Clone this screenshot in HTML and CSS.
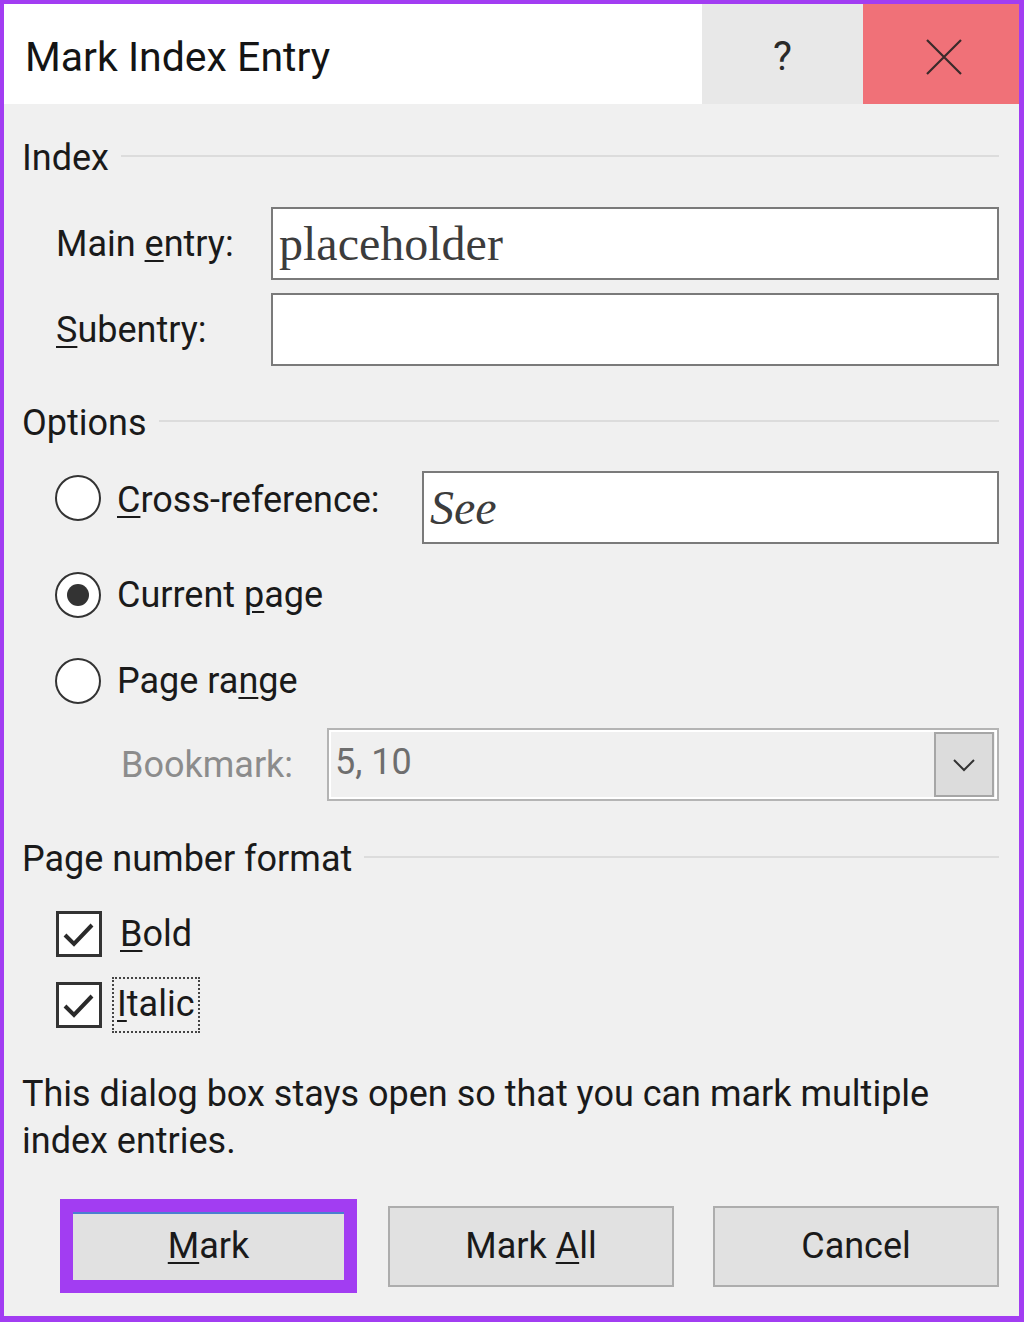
FILE: index.html
```html
<!DOCTYPE html>
<html lang="en">
<head>
  <meta charset="UTF-8" />
  <title>Mark Index Entry</title>
  <meta name="viewport" content="width=device-width, initial-scale=1.0" />
  <link rel="stylesheet" href="styles.css">
</head>
<body>
  <div class="dialog">
    <div class="titlebar">
      <div class="title">Mark Index Entry</div>
      <div class="tb-btn help">?</div>
      <div class="tb-btn close">
        <svg width="40" height="40" viewBox="0 0 40 40"><path d="M3 3 L37 37 M37 3 L3 37" stroke="#3a2a2a" stroke-width="2.2" fill="none"/></svg>
      </div>
    </div>

    <div class="body">
      <div class="group-title first">Index</div>

      <div class="field-row main-row">
        <label class="field-label">Main <u>e</u>ntry:</label>
        <div class="textbox serif">placeholder</div>
      </div>
      <div class="field-row sub-row">
        <label class="field-label"><u>S</u>ubentry:</label>
        <div class="textbox"></div>
      </div>

      <div class="group-title options">Options</div>

      <div class="radio-row cross-row">
        <span class="radio"></span>
        <span class="radio-text"><u>C</u>ross-reference:</span>
        <div class="textbox serif italic">See</div>
      </div>
      <div class="radio-row current-row">
        <span class="radio checked"></span>
        <span class="radio-text">Current <u>p</u>age</span>
      </div>
      <div class="radio-row range-row">
        <span class="radio"></span>
        <span class="radio-text">Page ra<u>n</u>ge</span>
      </div>

      <div class="bookmark-row">
        <span class="bookmark-label">Bookmark:</span>
        <div class="select">
          <span class="select-value">5, 10</span>
          <span class="select-btn">
            <svg width="24" height="14" viewBox="0 0 24 14"><path d="M2 2 L12 12 L22 2" stroke="#333" stroke-width="2" fill="none"/></svg>
          </span>
        </div>
      </div>

      <div class="group-title format">Page number format</div>

      <div class="check-row bold-row">
        <span class="checkbox">
          <svg width="40" height="40" viewBox="0 0 40 40"><path d="M6 21 L15 30 L33 11" stroke="#2a2a2a" stroke-width="4" fill="none"/></svg>
        </span>
        <span class="check-text"><u>B</u>old</span>
      </div>
      <div class="check-row italic-row">
        <span class="checkbox">
          <svg width="40" height="40" viewBox="0 0 40 40"><path d="M6 21 L15 30 L33 11" stroke="#2a2a2a" stroke-width="4" fill="none"/></svg>
        </span>
        <span class="check-text focus"><u>I</u>talic</span>
      </div>

      <p class="note">This dialog box stays open so that you can mark multiple index entries.</p>

      <div class="buttons">
        <button class="btn btn-mark"><u>M</u>ark</button>
        <button class="btn btn-all">Mark <u>A</u>ll</button>
        <button class="btn btn-cancel">Cancel</button>
      </div>
    </div>
  </div>
</body>
</html>
```

FILE: styles.css
```css
* { box-sizing: border-box; margin: 0; padding: 0; }

body {
  font-family: Roboto, "Noto Sans", sans-serif;
  background: #a23df2;
  color: #1a1a1a;
}

u { text-decoration-thickness: 2px; text-underline-offset: 4px; }

.dialog {
  width: 1024px;
  height: 1322px;
  border: 4px solid #a23df2;
  border-right-width: 5px;
  border-bottom-width: 6px;
  background: #f0f0f0;
  display: flex;
  flex-direction: column;
}

.titlebar {
  height: 100px;
  display: flex;
  background: #fff;
}

.title {
  flex: 1;
  padding-left: 21px;
  padding-top: 6px;
  font-size: 41px;
  line-height: 94px;
  color: #141414;
}

.tb-btn {
  display: flex;
  align-items: center;
  justify-content: center;
  height: 100px;
}

.help {
  width: 161px;
  background: #e8e8e8;
  font-size: 40px;
  color: #2a2a2a;
  padding-top: 4px;
}

.close {
  width: 156px;
  background: #f07178;
  padding-top: 6px;
  padding-left: 6px;
}

.body {
  padding: 0 20px 0 18px;
  font-size: 36px;
}

.group-title {
  display: flex;
  align-items: center;
  height: 40px;
}

.group-title::after {
  content: "";
  flex: 1;
  height: 2px;
  background: #dcdcdc;
  margin-left: 12px;
  margin-top: -4px;
}

.group-title.first { margin-top: 34px; }
.group-title.options { margin-top: 37px; }
.group-title.format { margin-top: 38px; }

.field-row {
  display: flex;
  align-items: center;
}

.main-row { margin-top: 29px; }
.sub-row { margin-top: 13px; }

.field-label {
  width: 249px;
  padding-left: 34px;
}

.textbox {
  flex: 1;
  height: 73px;
  background: #fff;
  border: 2px solid #7a7a7a;
  padding-left: 6px;
  display: flex;
  align-items: center;
}

.serif {
  font-family: "Liberation Serif", "DejaVu Serif", serif;
  font-size: 48px;
  color: #3c3c3c;
}

.italic { font-style: italic; }

.radio-row {
  display: flex;
  align-items: center;
  padding-left: 33px;
}

.cross-row { margin-top: 28px; align-items: flex-start; }
.current-row { margin-top: 28px; height: 46px; }
.range-row { margin-top: 40px; height: 46px; }

.radio {
  width: 46px;
  height: 46px;
  border-radius: 50%;
  border: 2px solid #333;
  background: #fff;
  display: flex;
  align-items: center;
  justify-content: center;
  flex-shrink: 0;
}

.radio.checked::after {
  content: "";
  width: 22px;
  height: 22px;
  border-radius: 50%;
  background: #333;
}

.radio-text { margin-left: 16px; }

.cross-row .radio { margin-top: 4px; }
.cross-row .radio-text { width: 305px; line-height: 46px; margin-top: 6px; }

.bookmark-row {
  display: flex;
  align-items: center;
  margin-top: 24px;
}

.bookmark-label {
  width: 305px;
  padding-left: 99px;
  color: #8c8c8c;
}

.select {
  flex: 1;
  height: 73px;
  border: 2px solid #b4b4b4;
  box-shadow: inset 0 0 0 2px #fff;
  background: #f0f0f0;
  display: flex;
  align-items: center;
  padding: 0 3px 0 6px;
}

.select-value {
  flex: 1;
  color: #6e6e6e;
  margin-top: -6px;
}

.select-btn {
  width: 60px;
  height: 65px;
  background: #dcdcdc;
  border: 2px solid #a6a6a6;
  display: flex;
  align-items: center;
  justify-content: center;
}

.check-row {
  display: flex;
  align-items: center;
  padding-left: 34px;
  height: 46px;
}

.bold-row { margin-top: 32px; }
.italic-row { margin-top: 25px; }

.checkbox {
  width: 46px;
  height: 46px;
  border: 3px solid #333;
  background: #fff;
  display: flex;
  align-items: center;
  justify-content: center;
  flex-shrink: 0;
}

.check-text {
  margin-left: 16px;
  padding: 2px 2px;
}

.check-text.focus {
  margin-left: 10px;
  padding: 4px 3px 6px 3px;
  border: 2px dotted #444;
}

.note {
  margin-top: 43px;
  line-height: 47px;
  width: 960px;
}

.buttons {
  display: flex;
  align-items: center;
  margin-top: 34px;
}

.btn {
  font-family: Roboto, "Noto Sans", sans-serif;
  font-size: 36px;
  color: #1a1a1a;
  background: #e1e1e1;
  border: 2px solid #adadad;
  height: 81px;
  width: 286px;
}

.btn-mark {
  width: 297px;
  height: 94px;
  border: 13px solid #a23df2;
  box-shadow: inset 0 2px 0 #4a7fd0;
  margin-left: 38px;
}

.btn-all { margin-left: 31px; }
.btn-cancel { margin-left: 39px; }
```
